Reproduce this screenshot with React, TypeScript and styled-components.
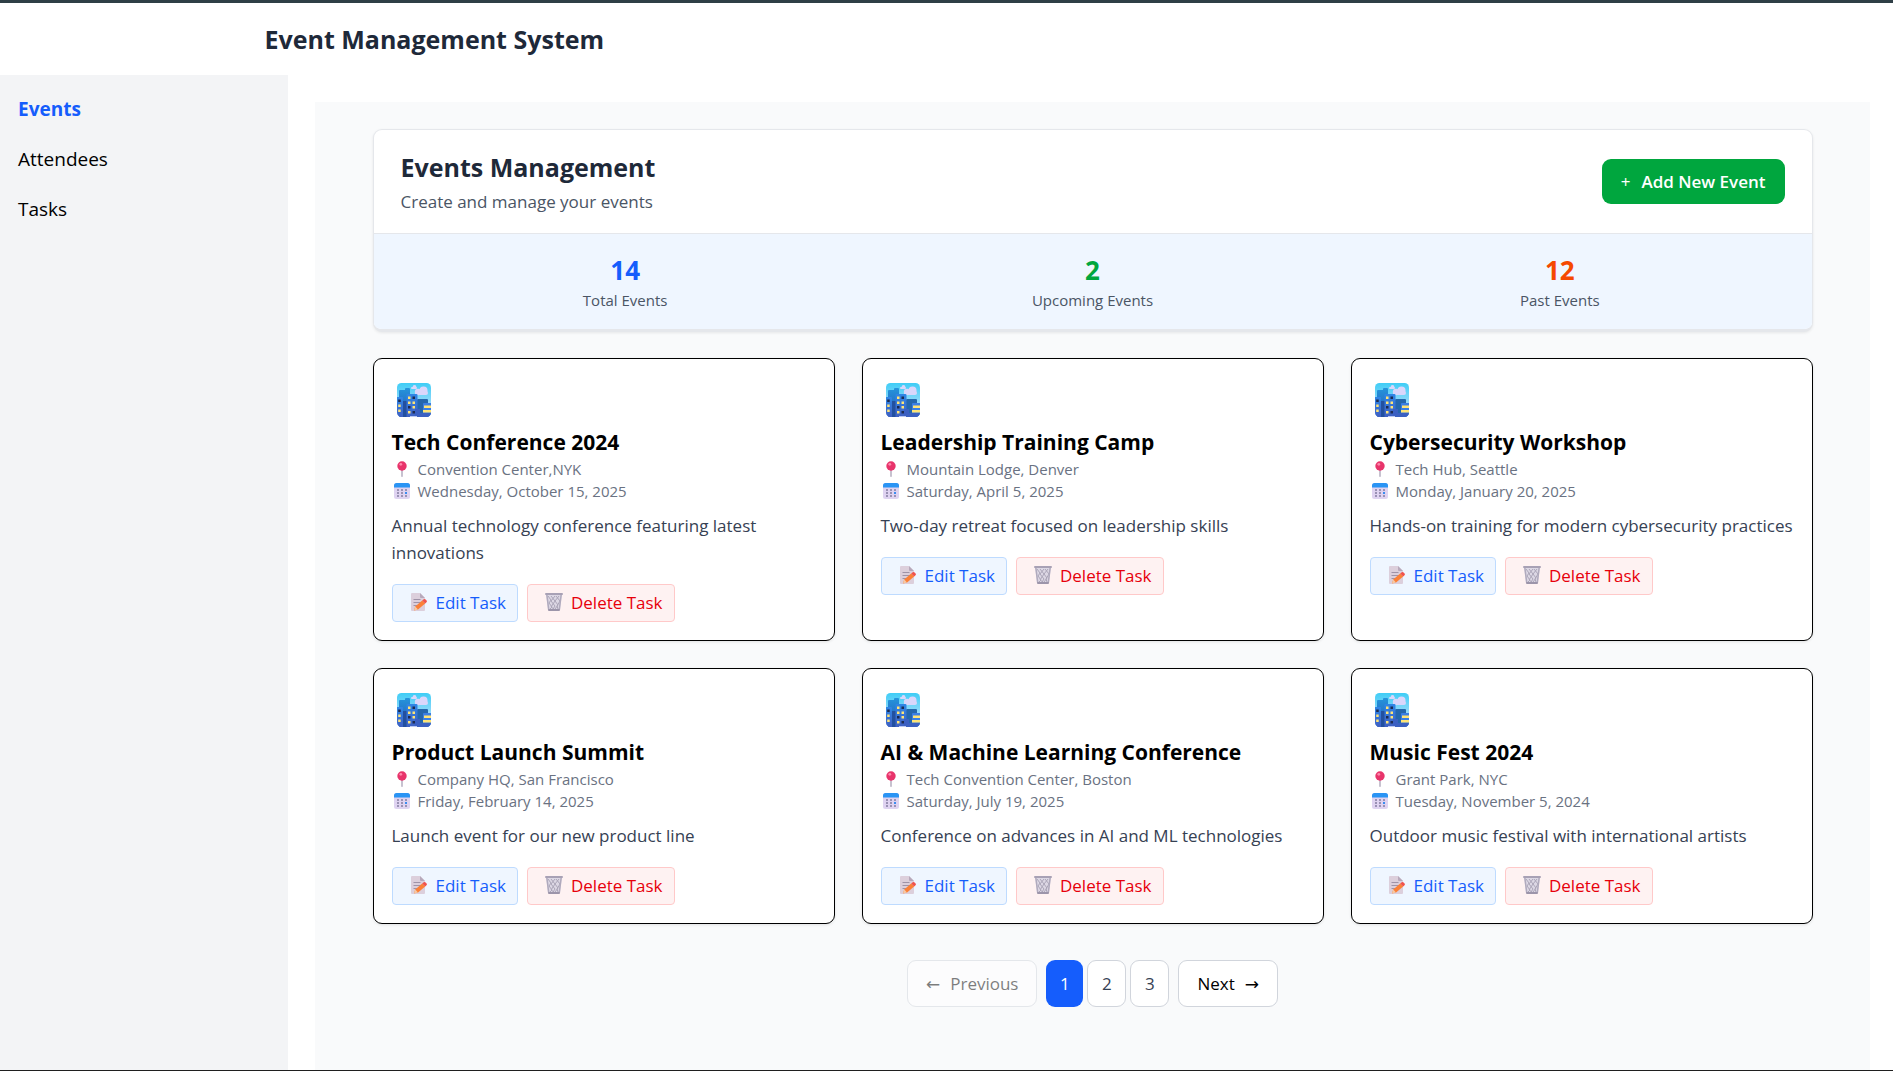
import React from "react";
import styled, { createGlobalStyle, css } from "styled-components";

const GlobalStyle = createGlobalStyle`
  *, *::before, *::after { box-sizing: border-box; }
  body {
    margin: 0;
    background: #ffffff;
    color: #000000;
    font-family: "Open Sans", "Noto Sans", "DejaVu Sans", sans-serif;
    font-size: 17px;
    line-height: 27px;
  }
  h1, h2, h3, p, ul, dl, dd { margin: 0; padding: 0; }
  button { font: inherit; cursor: pointer; margin: 0; }
`;

const Page = styled.div`
  display: flex;
  flex-direction: column;
  min-height: 100vh;
  border-top: 3px solid #2f3f46;
  border-bottom: 1px solid #1f1f1f;
`;

const TopBar = styled.header`
  width: 100%;
  max-width: 1440px;
  height: 72px;
  margin: 0 auto;
  padding: 0 38px;
  display: flex;
  align-items: center;
`;

const Heading = styled.h1`
  font-size: 25px;
  line-height: 38px;
  font-weight: 700;
  color: #1e2939;
`;

const Body = styled.div`
  flex: 1;
  display: flex;
`;

const Sidebar = styled.nav`
  flex: 0 0 288px;
  padding: 18px;
  background: #f3f4f6;
`;

const NavList = styled.ul`
  display: flex;
  flex-direction: column;
  gap: 18px;
  list-style: none;
`;

const NavLink = styled.a<{ $active?: boolean }>`
  display: block;
  font-size: 19px;
  line-height: 32px;
  text-decoration: none;
  color: ${(p) => (p.$active ? "#155dfc" : "#000000")};
  font-weight: ${(p) => (p.$active ? 700 : 400)};
`;

const Main = styled.main`
  flex: 1;
  min-width: 0;
  display: flex;
  padding: 27px 23px 0 27px;
`;

const Panel = styled.div`
  flex: 1;
  min-width: 0;
  padding: 27px 18px;
  background: #f9fafb;
`;

const Container = styled.div`
  max-width: 1440px;
  margin: 0 auto;
`;

const Summary = styled.section`
  overflow: hidden;
  margin-bottom: 26px;
  background: #ffffff;
  border: 1px solid #e5e7eb;
  border-bottom-width: 3px;
  border-radius: 9px;
  box-shadow: 0 1px 3px rgba(0, 0, 0, 0.08);
`;

const SummaryHead = styled.div`
  display: flex;
  align-items: center;
  justify-content: space-between;
  padding: 18px 27px;
  border-bottom: 1px solid #e5e7eb;
`;

const SummaryText = styled.p`
  margin-top: 2px;
  color: #4a5565;
`;

const AddButton = styled.button`
  display: flex;
  align-items: center;
  gap: 11px;
  height: 45px;
  padding: 0 19px;
  border: 0;
  border-radius: 9px;
  background: #00a63e;
  color: #ffffff;
  font-weight: 600;
`;

const Plus = styled.span`
  font-weight: 400;
`;

const Stats = styled.dl`
  display: grid;
  grid-template-columns: repeat(3, 1fr);
  gap: 18px;
  padding: 18px 27px;
  background: #eff6ff;
`;

const Stat = styled.div`
  display: flex;
  flex-direction: column-reverse;
  text-align: center;
`;

const StatLabel = styled.dt`
  font-size: 15px;
  line-height: 22px;
  color: #4a5565;
`;

const StatValue = styled.dd<{ $color: string }>`
  font-size: 26px;
  line-height: 37px;
  font-weight: 700;
  color: ${(p) => p.$color};
`;

const Grid = styled.div`
  display: grid;
  grid-template-columns: repeat(3, 1fr);
  gap: 27px;
`;

const Card = styled.article`
  padding: 18px;
  background: #ffffff;
  border: 1px solid #000000;
  border-radius: 9px;
  box-shadow: 0 1px 3px rgba(0, 0, 0, 0.1);
`;

const CardIcon = styled.div`
  display: flex;
  align-items: center;
  height: 45px;
  margin-bottom: 5px;
  padding-left: 5px;
`;

const CardTitle = styled.h3`
  font-size: 21px;
  line-height: 31px;
  font-weight: 700;
`;

const Meta = styled.p`
  display: flex;
  align-items: center;
  gap: 5px;
  font-size: 15px;
  line-height: 22px;
  color: #6a7282;
`;

const MetaIcon = styled.span`
  display: flex;
  justify-content: center;
  width: 21px;
`;

const Description = styled.p`
  margin-top: 10px;
  color: #364153;
`;

const Actions = styled.div`
  display: flex;
  gap: 9px;
  margin-top: 18px;
`;

const tones = {
  edit: css`
    color: #155dfc;
    background: #eff6ff;
    border-color: #bedbff;
  `,
  remove: css`
    color: #e7000b;
    background: #fef2f2;
    border-color: #ffc9c9;
  `,
};

const ActionButton = styled.button<{ $tone: keyof typeof tones }>`
  display: flex;
  align-items: center;
  gap: 8px;
  height: 38px;
  padding: 0 11px 2px 17px;
  border: 1px solid;
  border-radius: 4px;
  ${(p) => tones[p.$tone]}
`;

const Pagination = styled.nav`
  display: flex;
  justify-content: center;
  gap: 9px;
  margin-top: 36px;
`;

const PageNumbers = styled.div`
  display: flex;
  gap: 4px;
`;

const StepButton = styled.button`
  display: flex;
  align-items: center;
  gap: 10px;
  height: 47px;
  padding: 0 18px;
  background: #ffffff;
  color: #000000;
  border: 1px solid #d1d5dc;
  border-radius: 9px;
  &:disabled { opacity: 0.5; cursor: default; }
`;

const PageButton = styled.button<{ $current?: boolean }>`
  width: ${(p) => (p.$current ? "37px" : "39px")};
  height: 47px;
  padding: 0;
  border-radius: 9px;
  border: ${(p) => (p.$current ? "0" : "1px solid #d1d5dc")};
  background: ${(p) => (p.$current ? "#155dfc" : "#ffffff")};
  color: ${(p) => (p.$current ? "#ffffff" : "#364153")};
`;

const CityIcon = () => (
  <svg width="34" height="34" viewBox="0 0 34 34" aria-hidden="true">
    <defs>
      <linearGradient id="sky" x1="0" y1="0" x2="0" y2="1">
        <stop offset="0" stopColor="#3fcdf6" />
        <stop offset="0.7" stopColor="#a6dcfb" />
      </linearGradient>
      <linearGradient id="tower" x1="0" y1="0" x2="0" y2="1">
        <stop offset="0" stopColor="#2f86e6" />
        <stop offset="1" stopColor="#4060c2" />
      </linearGradient>
      <linearGradient id="back" x1="0" y1="0" x2="0" y2="1">
        <stop offset="0" stopColor="#2594dc" />
        <stop offset="1" stopColor="#2358b4" />
      </linearGradient>
      <clipPath id="frame"><rect width="34" height="34" rx="4.500" /></clipPath>
    </defs>
    <g clipPath="url(#frame)">
      <rect width="34" height="34" fill="url(#sky)" />
      <g fill="#dad6fb">
        <circle cx="26.500" cy="7.500" r="4" />
        <circle cx="21" cy="9" r="3.200" />
        <rect x="18" y="8" width="13" height="4" rx="2" />
        <circle cx="17.500" cy="4" r="1.900" />
        <rect x="14" y="4" width="6" height="2" rx="1" />
      </g>
      <path d="M2 8q0-1 1-1h5V6q0-1 1-1h3q1 0 1 1v28H2z" fill="url(#back)" />
      <path d="M20 17q0-1 1-1h9q1 0 1 1v17H20z" fill="#2467ad" />
      <path d="M6 18h5v16H6z" fill="#23509f" />
      <path d="M0 14h5q1 0 1 1v19H0z" fill="url(#tower)" />
      <path d="M9.500 12q0-1 1-1h9q1 0 1 1v22h-11z" fill="url(#tower)" />
      <path d="M26 21q0-1 1-1h7v14h-8z" fill="#3a7fe4" />
      <path d="M18 26h5v8h-5zM23 30h11v4H23z" fill="#3b60c2" />
      <path d="M13 33h7v1h-7z" fill="#b8c8f4" />
      <path d="M11 13.500h2.500v2.500H11zM11 18.500h2.500V21H11zM15.500 18.500H18V21h-2.500zM15.500 23H18v2.500h-2.500zM11 28h2.500v2.500H11zM1.200 21.500h2.500V24H1.200zM1.200 26.500h2.500V29H1.200zM27 22.500h7V25h-7zM26 27h8v2.500h-8z" fill="#ffe476" />
      <path d="M15.500 13.500H18V16h-2.500zM11 23h2.500v2.500H11zM15.500 28H18v2.500h-2.500zM1.200 16.500h2.500V19H1.200z" fill="#1d2b52" />
    </g>
  </svg>
);

const PinIcon = () => (
  <svg width="10" height="16" viewBox="0 0 10 16" aria-hidden="true">
    <rect x="4.200" y="8" width="1.600" height="8" rx="0.800" fill="#b9b3c4" />
    <circle cx="5" cy="5" r="4.700" fill="#e8346b" />
    <circle cx="3.800" cy="3.300" r="1.400" fill="#ff86ab" />
  </svg>
);

const CalendarIcon = () => (
  <svg width="16" height="16" viewBox="0 0 16 16" aria-hidden="true">
    <rect width="16" height="16" rx="2.500" fill="#dfd3f1" />
    <path d="M0 4.500V2.500Q0 0 2.500 0h11Q16 0 16 2.500v2z" fill="#2a94f4" />
    <g fill="#9a92b4">
      <rect x="7" y="6" width="2" height="2" />
      <rect x="11" y="6" width="2" height="2" />
      <rect x="3" y="6" width="2" height="2" />
      <rect x="3" y="9" width="2" height="2" />
      <rect x="7" y="9" width="2" height="2" />
      <rect x="3" y="12" width="2" height="2" />
      <rect x="7" y="12" width="2" height="2" />
      <rect x="11" y="12" width="2" height="2" />
    </g>
    <rect x="11" y="9" width="2" height="2" fill="#3a8df0" />
  </svg>
);

const MemoIcon = () => (
  <svg width="18" height="18" viewBox="0 0 18 18" aria-hidden="true">
    <path d="M1 1q0-1 1-1h8l5 5v12q0 1-1 1H2q-1 0-1-1z" fill="#dccfdc" />
    <path d="M10 0l5 5h-4q-1 0-1-1z" fill="#b7a9bb" />
    <path d="M3.500 6.500h7M3.500 9.500h8M3.500 12.500h4" stroke="#9f93a8" strokeWidth="1" />
    <path d="M4 17.500l1.200-4 7-6 3 3-7.200 6z" fill="#fb8038" />
    <path d="M4 17.500l1.200-4 2.800 3z" fill="#f6c9a4" />
    <path d="M12.200 7.500l1.600-1.200q1-.6 1.800.2l1 1q.8 1-.1 1.800l-1.300 1.200z" fill="#f0524c" />
  </svg>
);

const TrashIcon = () => (
  <svg width="18" height="18" viewBox="0 0 18 18" aria-hidden="true">
    <path d="M1 1h16l-2 16H3z" fill="#dcd7e4" />
    <path d="M3 3l3 4-2 3 3 4-2 2M6 3l4 5-4 6 3 2M10 3L6 8l4 5-2 3M14 3l-4 5 3 4-3 4M11 3l4 5-3 5 1 3" fill="none" stroke="#aba5b8" strokeWidth="1" />
    <path d="M1 1l2 16h1.500L2.500 1zM17 1l-2 16h-1.500l2-16z" fill="#b0aabd" />
    <rect width="18" height="2" rx="1" fill="#a8a1b5" />
    <rect x="3" y="16" width="12" height="2" rx="1" fill="#9c95aa" />
  </svg>
);

interface EventItem {
  title: string;
  place: string;
  date: string;
  text: string;
}

const events: EventItem[] = [
  { title: "Tech Conference 2024", place: "Convention Center,NYK", date: "Wednesday, October 15, 2025", text: "Annual technology conference featuring latest innovations" },
  { title: "Leadership Training Camp", place: "Mountain Lodge, Denver", date: "Saturday, April 5, 2025", text: "Two-day retreat focused on leadership skills" },
  { title: "Cybersecurity Workshop", place: "Tech Hub, Seattle", date: "Monday, January 20, 2025", text: "Hands-on training for modern cybersecurity practices" },
  { title: "Product Launch Summit", place: "Company HQ, San Francisco", date: "Friday, February 14, 2025", text: "Launch event for our new product line" },
  { title: "AI & Machine Learning Conference", place: "Tech Convention Center, Boston", date: "Saturday, July 19, 2025", text: "Conference on advances in AI and ML technologies" },
  { title: "Music Fest 2024", place: "Grant Park, NYC", date: "Tuesday, November 5, 2024", text: "Outdoor music festival with international artists" },
];

const stats = [
  { label: "Total Events", value: 14, color: "#155dfc" },
  { label: "Upcoming Events", value: 2, color: "#00a63e" },
  { label: "Past Events", value: 12, color: "#f54900" },
];

const EventCard = ({ event }: { event: EventItem }) => (
  <Card>
    <CardIcon><CityIcon /></CardIcon>
    <CardTitle>{event.title}</CardTitle>
    <Meta><MetaIcon><PinIcon /></MetaIcon>{event.place}</Meta>
    <Meta><MetaIcon><CalendarIcon /></MetaIcon>{event.date}</Meta>
    <Description>{event.text}</Description>
    <Actions>
      <ActionButton type="button" $tone="edit"><MemoIcon />Edit Task</ActionButton>
      <ActionButton type="button" $tone="remove"><TrashIcon />Delete Task</ActionButton>
    </Actions>
  </Card>
);

export default function App() {
  return (
    <Page>
      <GlobalStyle />
      <TopBar><Heading>Event Management System</Heading></TopBar>
      <Body>
        <Sidebar>
          <NavList>
            <li><NavLink href="#events" $active>Events</NavLink></li>
            <li><NavLink href="#attendees">Attendees</NavLink></li>
            <li><NavLink href="#tasks">Tasks</NavLink></li>
          </NavList>
        </Sidebar>
        <Main>
          <Panel>
            <Container>
              <Summary>
                <SummaryHead>
                  <div>
                    <Heading as="h2">Events Management</Heading>
                    <SummaryText>Create and manage your events</SummaryText>
                  </div>
                  <AddButton type="button"><Plus>+</Plus>Add New Event</AddButton>
                </SummaryHead>
                <Stats>
                  {stats.map((s) => (
                    <Stat key={s.label}>
                      <StatLabel>{s.label}</StatLabel>
                      <StatValue $color={s.color}>{s.value}</StatValue>
                    </Stat>
                  ))}
                </Stats>
              </Summary>
              <Grid>
                {events.map((e) => <EventCard key={e.title} event={e} />)}
              </Grid>
              <Pagination aria-label="Pages">
                <StepButton type="button" disabled><span>←</span>Previous</StepButton>
                <PageNumbers>
                  <PageButton type="button" $current>1</PageButton>
                  <PageButton type="button">2</PageButton>
                  <PageButton type="button">3</PageButton>
                </PageNumbers>
                <StepButton type="button">Next<span>→</span></StepButton>
              </Pagination>
            </Container>
          </Panel>
        </Main>
      </Body>
    </Page>
  );
}
